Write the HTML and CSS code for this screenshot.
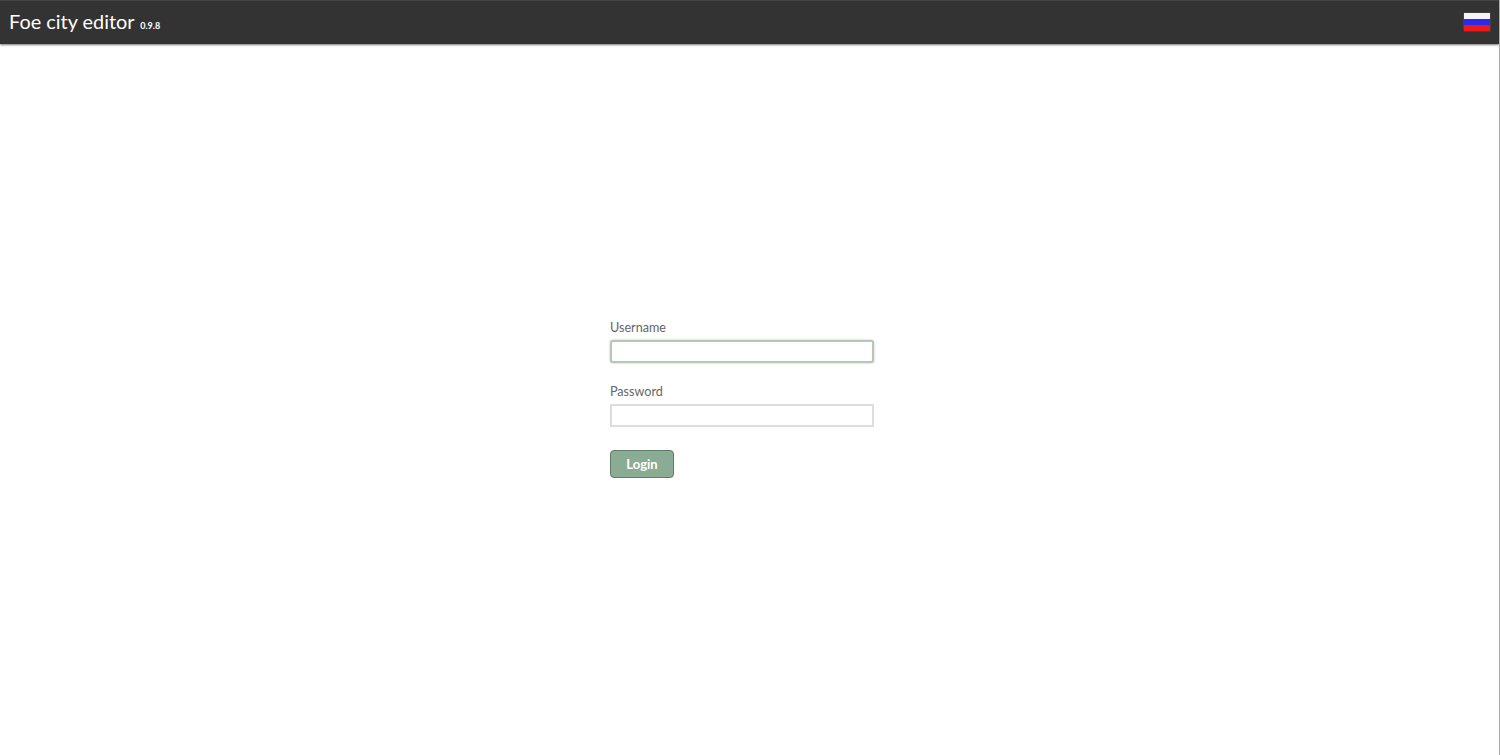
FILE: index.html
```html
<!DOCTYPE html>
<html lang="en">
<head>
  <meta charset="UTF-8">
  <title>Foe city editor</title>
  <link rel="stylesheet" href="styles.css">
</head>
<body>
  <header class="topbar">
    <div class="brand">Foe city editor <small class="version">0.9.8</small></div>
    <a href="#" class="lang" title="Russian">
      <span class="flag-white"></span>
      <span class="flag-blue"></span>
      <span class="flag-red"></span>
    </a>
  </header>

  <main class="page">
    <form class="login">
      <label for="username">Username</label>
      <input type="text" id="username" class="active">
      <label for="password">Password</label>
      <input type="password" id="password">
      <button type="button" class="btn">Login</button>
    </form>
  </main>
</body>
</html>
```

FILE: styles.css
```css
html, body {
  height: 100%;
}

body {
  margin: 0;
  background: #fff;
  font-family: Lato, "Open Sans", sans-serif;
  color: #666;
  overflow: hidden;
  box-sizing: border-box;
  border-right: 1px solid #aaa;
}

.topbar {
  height: 44px;
  background: #333334;
  border-top: 1px solid #444;
  box-sizing: border-box;
  box-shadow: 0 1px 2px #777;
  display: flex;
  justify-content: space-between;
  align-items: center;
  padding: 0 9px 2px 9px;
}

.brand {
  color: #fff;
  font-size: 19.9px;
  margin-top: -2px;
  white-space: nowrap;
}

.version {
  font-size: 9px;
  font-weight: 700;
  margin-left: 1px;
}

.lang {
  display: flex;
  flex-direction: column;
  width: 26px;
  height: 18px;
  margin-top: 1px;
  box-shadow: 0 0 1px #888;
}

.lang span {
  flex: 1;
}

.flag-white { background: #f4f4f4; }
.flag-blue { background: #2a2ae8; }
.flag-red { background: #f01818; }

.page {
  padding: 275px 0 0 610px;
}

.login {
  display: flex;
  flex-direction: column;
  align-items: flex-start;
  width: 264px;
}

label {
  font-size: 12.6px;
  line-height: 17px;
  margin-bottom: 4px;
}

input {
  width: 100%;
  height: 23px;
  box-sizing: border-box;
  border: 2px solid #ddd;
  background: #fff;
  margin: 0 0 20px;
  padding: 2px 4px;
  outline: none;
}

input.active {
  border-color: #b4c8b9;
  border-radius: 3px;
  box-shadow: 0 0 2px #9fbfa8;
}

.btn {
  width: 64px;
  height: 28px;
  margin-top: 3px;
  background: #8aab94;
  border: 1px solid #5f7d69;
  border-radius: 4px;
  color: #fff;
  font-family: inherit;
  font-size: 13px;
  font-weight: 700;
  padding: 0;
  cursor: pointer;
}
```
